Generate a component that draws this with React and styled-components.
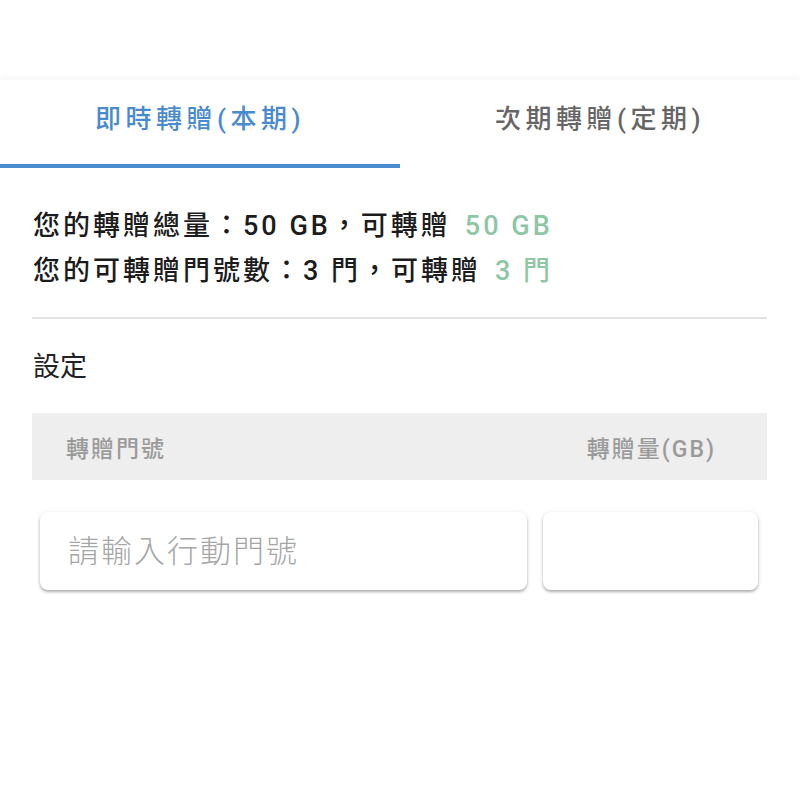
import React, { useState } from "react";
import styled, { createGlobalStyle } from "styled-components";

const GlobalStyle = createGlobalStyle`
	body {
		margin: 0;
		background: #ffffff;
		font-family: Roboto, "Noto Sans CJK TC", sans-serif;
		color: #1f1f1f;
	}
`;

const Page = styled.div`
	width: 800px;
	min-height: 800px;
	padding-top: 80px;
	box-sizing: border-box;
`;

const TabBar = styled.nav`
	display: flex;
	height: 88px;
	box-shadow: 0 -3px 5px rgba(0, 0, 0, 0.035);
`;

const Tab = styled.button`
	flex: 1;
	border: none;
	background: none;
	padding: 0 0 12px;
	font-family: inherit;
	font-size: 26px;
	font-weight: 500;
	letter-spacing: 4.5px;
	color: ${({ active }) => (active ? "#4a8bd0" : "#666666")};
	border-bottom: 4px solid ${({ active }) => (active ? "#4a8bd0" : "transparent")};
	cursor: pointer;
`;

const Content = styled.section`
	padding: 0 33px 0 32px;
`;

const Info = styled.div`
	margin-top: 36px;
	font-size: 27px;
	font-weight: 500;
	line-height: 45px;
	letter-spacing: 3px;
	color: #1c1c1c;
`;

const Line = styled.div`
	padding-left: 1px;
`;

const Highlight = styled.span`
	color: #8ec7a5;
	margin-left: 14px;
`;

const Divider = styled.hr`
	margin: 23px 0 0;
	border: none;
	height: 2px;
	background: #e2e2e2;
`;

const SectionTitle = styled.h3`
	margin: 28px 0 0 1px;
	font-size: 27px;
	font-weight: 400;
	line-height: 40px;
	color: #222;
`;

const TableHead = styled.div`
	margin-top: 26px;
	height: 67px;
	background: #eeeeee;
	display: flex;
	align-items: center;
	justify-content: space-between;
	padding: 0 51px 0 34px;
	font-size: 23px;
	font-weight: 500;
	letter-spacing: 2px;
	color: #9a9a9a;
`;

const InputRow = styled.div`
	margin-top: 32px;
	padding: 0 9px 0 8px;
	display: flex;
	gap: 16px;
`;

const Field = styled.input`
	width: ${({ w }) => w}px;
	height: 78px;
	box-sizing: border-box;
	border: none;
	border-radius: 8px;
	background: #fff;
	padding: 0 0 0 28px;
	font-family: inherit;
	font-size: 31px;
	font-weight: 300;
	letter-spacing: 2px;
	color: #333;
	box-shadow: 0 2px 3px rgba(0, 0, 0, 0.3), 0 0 6px rgba(0, 0, 0, 0.06);
	outline: none;
	&::placeholder {
		color: #a6a6a6;
	}
`;

const App = () => {
	const [tab, setTab] = useState(0);
	return (
		<>
			<GlobalStyle />
			<Page>
				<TabBar>
					<Tab active={tab === 0} onClick={() => setTab(0)}>
						即時轉贈(本期)
					</Tab>
					<Tab active={tab === 1} onClick={() => setTab(1)}>
						次期轉贈(定期)
					</Tab>
				</TabBar>
				<Content>
					<Info>
						<Line>
							您的轉贈總量：50 GB，可轉贈<Highlight>50 GB</Highlight>
						</Line>
						<Line>
							您的可轉贈門號數：3 門，可轉贈<Highlight>3 門</Highlight>
						</Line>
					</Info>
					<Divider />
					<SectionTitle>設定</SectionTitle>
					<TableHead>
						<span>轉贈門號</span>
						<span>轉贈量(GB)</span>
					</TableHead>
				</Content>
				<Content>
					<InputRow>
						<Field w={487} placeholder="請輸入行動門號" />
						<Field w={215} />
					</InputRow>
				</Content>
			</Page>
		</>
	);
};

export default App;
